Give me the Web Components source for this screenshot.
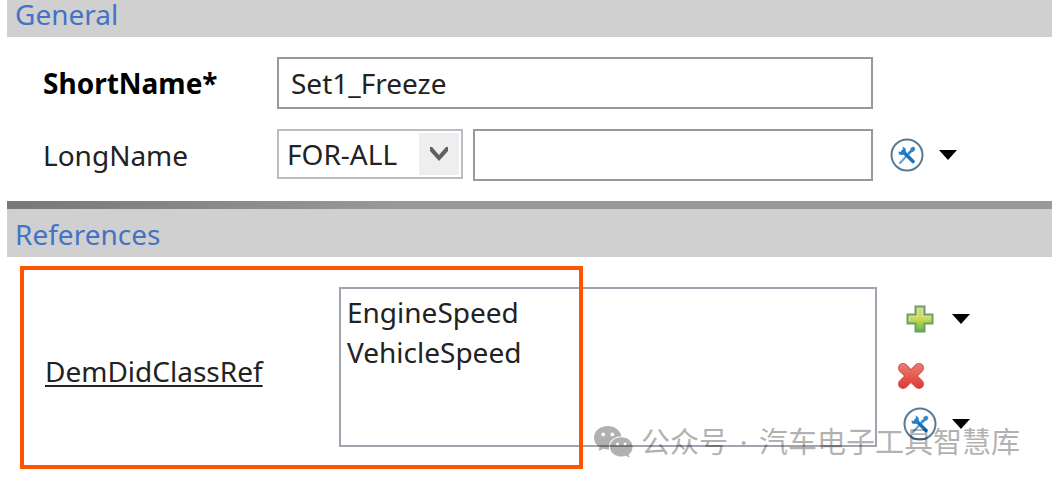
<!DOCTYPE html>
<html lang="en">
<head>
    <meta charset="UTF-8">
    <meta name="viewport" content="width=device-width, initial-scale=1.0">
    <title>Set1_Freeze</title>
    <style>
        body {
            margin: 0;
            background: #fff;
            color: #222;
            font: 28px/40px "Noto Sans", "Open Sans", sans-serif;
        }
        main {
            position: relative;
            margin-left: 7px;
        }
        account-mark span {
            padding: 0 4px;
        }
    </style>
</head>
<body>
    <main>
        <property-section heading="General">
            <text-property label="ShortName*" value="Set1_Freeze"></text-property>
            <language-property label="LongName"></language-property>
        </property-section>
        <property-section heading="References" divided>
            <reference-property label="DemDidClassRef" items="EngineSpeed,VehicleSpeed"></reference-property>
            <callout-frame slot="overlay"></callout-frame>
        </property-section>
        <account-mark>公众号<span> · </span>汽车电子工具智慧库</account-mark>
    </main>

    <script>
        const ICONS = {
            tools: `
                <svg width="34" height="34" viewBox="0 0 34 34" fill="none" aria-hidden="true">
                    <circle cx="17" cy="17" r="15.500" fill="#fff" stroke="#587a93" stroke-width="2"/>
                    <path d="M21 13 10 25" stroke="#5ba3da" stroke-width="2" stroke-linecap="round"/>
                    <path d="M17.500 14.500l3-2.500v-2l3-1.500 2 2-1.500 3-2 .5-2.500 2.500z" fill="#3585c6"/>
                    <path d="M13 13.500l10 10" stroke="#1874c0" stroke-width="3.600" stroke-linecap="round"/>
                    <path d="M12.500 8.500l3 2 .5 4-3 2.500-4-.5-.5-3 2.500 .5 2-2z" fill="#287fc4"/>
                </svg>`,
            add: `
                <svg width="28" height="28" viewBox="0 0 28 28" aria-hidden="true">
                    <defs>
                        <linearGradient id="g" x2="0" y2="1">
                            <stop offset="0" stop-color="#c9db7b"/>
                            <stop offset=".5" stop-color="#cadb58"/>
                            <stop offset="1" stop-color="#62b33c"/>
                        </linearGradient>
                    </defs>
                    <path d="M9.500 1.500h9v8h8v9h-8v8h-9v-8h-8v-9h8z" fill="url(#g)" stroke="#6d9e6b" stroke-width="2"/>
                    <path d="M11.500 3.500h5v8h8v1M3.500 16v-4.500h8v-8" fill="none" stroke="#e5eaa5" stroke-opacity=".7"/>
                </svg>`,
            remove: `
                <svg width="28" height="28" viewBox="0 0 28 28" fill="none" stroke-linecap="round" aria-hidden="true">
                    <defs>
                        <linearGradient id="r" gradientUnits="userSpaceOnUse" x1="0" y1="2" x2="0" y2="26">
                            <stop offset="0" stop-color="#ea7d72"/>
                            <stop offset="1" stop-color="#e03936"/>
                        </linearGradient>
                    </defs>
                    <path d="M6 6l16 16M22 6L6 22" stroke="#d2524c" stroke-width="10"/>
                    <path d="M6 6l16 16M22 6L6 22" stroke="url(#r)" stroke-width="8"/>
                </svg>`,
            caret: `
                <svg width="18" height="10" viewBox="0 0 18 10" aria-hidden="true">
                    <path d="M0 0h18L9 10z" fill="#000"/>
                </svg>`
        };

        // Shared by every row so that labels and fields line up
        const rowStyles = `
            :host {
                display: grid;
                grid-template-columns: 234px minmax(0, 1fr) 179px;
                align-items: center;
            }
            input, select {
                box-sizing: border-box;
                width: 100%;
                margin: 0;
                padding: 0 12px;
                border: 2px solid #999;
                border-radius: 0;
                background: #fff;
                color: inherit;
                font: inherit;
                outline: none;
            }
            input {
                height: 52px;
                min-width: 0;
            }
        `;

        class PropertySection extends HTMLElement {
            connectedCallback() {
                this.attachShadow({ mode: 'open' });
                this.shadowRoot.innerHTML = `
                    <style>
                        :host {
                            display: block;
                            position: relative;
                        }
                        :host([divided]) {
                            border-top: 8px solid;
                            border-image: linear-gradient(to right, #777, #999 400px) 8;
                        }
                        h2 {
                            margin: 0;
                            padding: 0 8px 8px;
                            background: #d0d0d0;
                            color: #4472c4;
                            font: inherit;
                            line-height: 29px;
                        }
                        :host([divided]) h2 {
                            padding-top: 11px;
                        }
                        .body {
                            display: grid;
                            gap: 20px;
                            padding: 20px 0 20px 36px;
                        }
                        :host([divided]) .body {
                            padding: 30px 0 30px 38px;
                        }
                    </style>
                    <h2>${this.getAttribute('heading')}</h2>
                    <div class="body"><slot></slot></div>
                    <slot name="overlay"></slot>
                `;
            }
        }

        class TextProperty extends HTMLElement {
            connectedCallback() {
                this.attachShadow({ mode: 'open' });
                this.shadowRoot.innerHTML = `
                    <style>
                        ${rowStyles}
                        label {
                            color: #000;
                            font-weight: 700;
                        }
                    </style>
                    <label for="field">${this.getAttribute('label')}</label>
                    <input id="field" type="text" value="${this.getAttribute('value')}">
                `;
            }
        }

        class LanguageProperty extends HTMLElement {
            connectedCallback() {
                this.attachShadow({ mode: 'open' });
                this.shadowRoot.innerHTML = `
                    <style>
                        ${rowStyles}
                        .fields {
                            display: flex;
                            align-items: flex-start;
                            gap: 10px;
                        }
                        .picker {
                            display: grid;
                            flex: 0 0 186px;
                            align-items: center;
                        }
                        .picker > * {
                            grid-area: 1 / 1;
                        }
                        select {
                            appearance: none;
                            height: 50px;
                            padding: 0 8px;
                            border-color: #bcbcc6;
                        }
                        .picker svg {
                            justify-self: end;
                            margin-right: 4px;
                            pointer-events: none;
                        }
                        tool-button {
                            padding-left: 17px;
                        }
                    </style>
                    <label for="field">${this.getAttribute('label')}</label>
                    <div class="fields">
                        <div class="picker">
                            <select aria-label="Language"><option>FOR-ALL</option></select>
                            <svg width="40" height="42" viewBox="0 0 40 42" aria-hidden="true">
                                <path d="M0 0h40v42H0z" fill="#eee"/>
                                <path d="M11 14v4l9 10 9-10v-4h-2l-7 8-7-8z" fill="#606060"/>
                            </svg>
                        </div>
                        <input id="field" type="text">
                    </div>
                    <tool-button icon="tools" label="Edit" menu></tool-button>
                `;
            }
        }

        class ReferenceProperty extends HTMLElement {
            connectedCallback() {
                const items = this.getAttribute('items').split(',');

                this.attachShadow({ mode: 'open' });
                this.shadowRoot.innerHTML = `
                    <style>
                        ${rowStyles}
                        :host {
                            grid-template-columns: 294px minmax(0, 1fr) 175px;
                        }
                        label {
                            padding-top: 8px;
                            text-decoration: underline;
                            text-decoration-thickness: 2px;
                            text-underline-offset: 3px;
                        }
                        select {
                            height: 160px;
                            padding: 4px 6px;
                            border-color: #a0a4ae;
                            overflow: hidden;
                        }
                        option {
                            min-height: 40px;
                            padding: 0;
                            line-height: 40px;
                        }
                        .actions {
                            display: grid;
                            grid-template-rows: 64px 50px 46px;
                            align-items: center;
                            padding-left: 20px;
                        }
                        tool-button {
                            padding-left: 6px;
                        }
                        tool-button[icon="remove"] {
                            padding-left: 0;
                        }
                    </style>
                    <label for="list">${this.getAttribute('label')}</label>
                    <select id="list" size="3" multiple>
                        ${items.map(item => `<option>${item}</option>`).join('')}
                    </select>
                    <div class="actions">
                        <tool-button icon="add" label="Add" menu></tool-button>
                        <tool-button icon="remove" label="Remove"></tool-button>
                        <tool-button icon="tools" label="Edit" menu></tool-button>
                    </div>
                `;
            }
        }

        class ToolButton extends HTMLElement {
            connectedCallback() {
                const label = this.getAttribute('label');
                const menu = this.hasAttribute('menu')
                    ? `<button type="button" aria-label="${label} options">${ICONS.caret}</button>`
                    : '';

                this.attachShadow({ mode: 'open' });
                this.shadowRoot.innerHTML = `
                    <style>
                        :host {
                            display: flex;
                            align-items: center;
                            gap: 14px;
                        }
                        button {
                            display: grid;
                            place-items: center;
                            min-width: 20px;
                            padding: 0;
                            border: 0;
                            background: none;
                            cursor: pointer;
                        }
                        .main {
                            min-width: 34px;
                        }
                        :host([icon="remove"]) .main {
                            min-width: 28px;
                        }
                        svg {
                            display: block;
                        }
                    </style>
                    <button type="button" class="main" aria-label="${label}">${ICONS[this.getAttribute('icon')]}</button>
                    ${menu}
                `;
            }
        }

        // Highlight drawn over the reference label and the start of its list
        class CalloutFrame extends HTMLElement {
            connectedCallback() {
                this.attachShadow({ mode: 'open' });
                this.shadowRoot.innerHTML = `
                    <style>
                        :host {
                            position: absolute;
                            top: 57px;
                            left: 13px;
                            box-sizing: border-box;
                            width: 563px;
                            height: 203px;
                            border: 4px solid #ff5500;
                            pointer-events: none;
                        }
                    </style>
                `;
            }
        }

        class AccountMark extends HTMLElement {
            connectedCallback() {
                this.attachShadow({ mode: 'open' });
                this.shadowRoot.innerHTML = `
                    <style>
                        :host {
                            position: absolute;
                            right: 32px;
                            bottom: 15px;
                            display: flex;
                            align-items: center;
                            gap: 8px;
                            color: #000;
                            font: 400 29px/40px "Noto Sans", "Noto Sans CJK SC", sans-serif;
                            white-space: nowrap;
                            opacity: 0.3;
                            pointer-events: none;
                        }
                    </style>
                    <svg width="39" height="32" viewBox="0 0 39 32" fill="currentColor" aria-hidden="true">
                        <path fill-rule="evenodd" d="M27.500 10.300C26 4 20.500 0 13.800 0 6 0 0 5 0 11.800c0 4 2.100 7.200 5.500 9.400L4.500 25l5-2.300c1.800.5 3.600.8 5.600.7C13.600 16 19.500 10.500 27.500 10.300ZM9.200 6.500a1.900 1.900 0 1 1 0 3.800 1.900 1.900 0 0 1 0-3.800Zm9.200 0a1.900 1.900 0 1 1 0 3.800 1.900 1.900 0 0 1 0-3.800Z"/>
                        <path fill-rule="evenodd" d="M27.500 11.300c-6.600 0-11.500 4.200-11.500 9.600s5 9.600 11.500 9.600c1.500 0 3-.2 4.200-.7l4 2-1-3.300c2.400-1.800 3.800-4.500 3.800-7.600 0-5.400-4.700-9.600-11-9.600Zm-3.900 5.200a1.500 1.500 0 1 1 0 3 1.500 1.500 0 0 1 0-3Zm7.500 0a1.500 1.500 0 1 1 0 3 1.500 1.500 0 0 1 0-3Z"/>
                    </svg>
                    <div><slot></slot></div>
                `;
            }
        }

        customElements.define('tool-button', ToolButton);
        customElements.define('property-section', PropertySection);
        customElements.define('text-property', TextProperty);
        customElements.define('language-property', LanguageProperty);
        customElements.define('reference-property', ReferenceProperty);
        customElements.define('callout-frame', CalloutFrame);
        customElements.define('account-mark', AccountMark);
    </script>
</body>
</html>
